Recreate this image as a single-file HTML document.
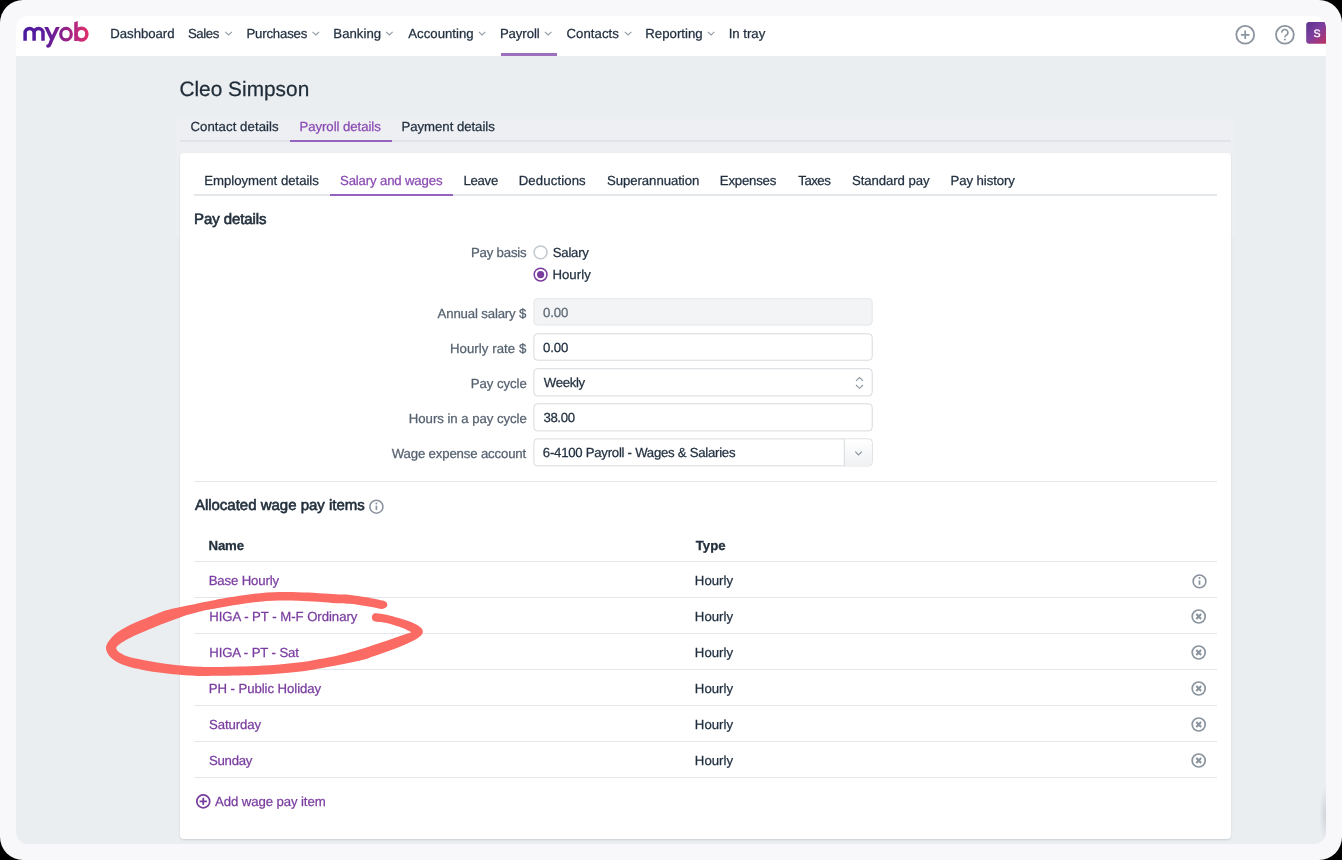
<!DOCTYPE html>
<html lang="en"><head><meta charset="utf-8"><title>Cleo Simpson - Payroll details</title>
<style>
html,body{margin:0;padding:0;}
body{width:1342px;height:860px;position:relative;overflow:hidden;background:#000;font-family:"Liberation Sans",sans-serif;}
.frame{position:absolute;left:0;top:0;width:1342px;height:860px;background:#f8f8fa;border-radius:23px;}
.inner{position:absolute;left:16px;top:16px;width:1310px;height:828px;background:#ebeef1;border-radius:12px;overflow:hidden;}
.nav{position:absolute;left:0;top:0;width:1310px;height:40px;background:#fff;}
.t{position:absolute;white-space:nowrap;line-height:1;text-rendering:geometricPrecision;-webkit-text-stroke:0.25px;}
.abs{position:absolute;}
.card{position:absolute;left:180px;top:153px;width:1051px;height:686px;background:#fff;border-radius:4px;box-shadow:0 1px 2px rgba(40,55,70,.16);}
.hl{position:absolute;height:1px;background:#e3e6ea;}
.inp{position:absolute;left:533px;width:340px;height:28px;box-sizing:border-box;border:1px solid #d9dde2;border-radius:4px;background:#fff;}
.inp.dis{background:#f3f4f5;border-color:#e6e8eb;}
svg{position:absolute;overflow:visible;}

</style></head>
<body>
<div class="frame"></div>
<div class="inner">
  <div class="abs" style="left:160px;top:103px;width:1059px;height:117px;background:#edeff2;"></div>
  <div class="nav"></div>
  <div class="abs" style="left:1303px;top:764px;width:7px;height:58px;background:radial-gradient(ellipse 7px 29px at 100% 60%,rgba(70,80,95,.17),rgba(70,80,95,0) 100%);"></div>
</div>
<!-- nav active underline -->
<div class="abs" style="left:500.5px;top:53px;width:56px;height:3px;background:#9d70bd;"></div>

<!-- tabs1 line -->
<div class="hl" style="left:180px;top:140px;width:1051px;height:2px;background:#e0e4e8;"></div>
<div class="abs" style="left:290px;top:140px;width:102px;height:2px;background:#9562bd;"></div>

<div class="card"></div>
<!-- tabs2 line -->
<div class="hl" style="left:194px;top:194px;width:1022.5px;height:2px;background:#e5e8eb;"></div>
<div class="abs" style="left:330px;top:194px;width:123px;height:2px;background:#9562bd;"></div>

<!-- divider -->
<div class="hl" style="left:194px;top:481px;width:1022.5px;"></div>

<!-- table lines -->
<div class="hl" style="left:194px;top:561px;width:1022.5px;"></div>
<div class="hl" style="left:194px;top:597px;width:1022.5px;"></div>
<div class="hl" style="left:194px;top:633px;width:1022.5px;"></div>
<div class="hl" style="left:194px;top:669px;width:1022.5px;"></div>
<div class="hl" style="left:194px;top:705px;width:1022.5px;"></div>
<div class="hl" style="left:194px;top:741px;width:1022.5px;"></div>
<div class="hl" style="left:194px;top:777px;width:1022.5px;"></div>

<svg width="1342" height="860" style="left:0;top:0" viewBox="0 0 1342 860" fill="none">
<defs><linearGradient id="lg" gradientUnits="userSpaceOnUse" x1="23" y1="0" x2="89" y2="0"><stop offset="0" stop-color="#4a1a9f"/><stop offset="0.35" stop-color="#5e1c9c"/><stop offset="0.62" stop-color="#8d2289"/><stop offset="0.8" stop-color="#b8297e"/><stop offset="1" stop-color="#e2306a"/></linearGradient>
<linearGradient id="av" x1="0" y1="0" x2="1" y2="1"><stop offset="0" stop-color="#5c3391"/><stop offset="0.45" stop-color="#7d3f9f"/><stop offset="1" stop-color="#c8305a"/></linearGradient>
<clipPath id="yc"><rect x="40" y="26.9" width="24" height="24"/></clipPath><clipPath id="ac"><rect x="16" y="16" width="1310" height="828" rx="12"/></clipPath></defs>
<g stroke="url(#lg)" stroke-width="3.5" fill="none">
<path d="M25.1,40.8V32.95A4.5,4.5 0 0 1 34.1,32.95V40.8M34.1,32.95A4.45,4.5 0 0 1 43,32.95V40.8"/>
<g clip-path="url(#yc)"><path d="M45.1,24.8L52.25,39.85"/><path d="M58.9,24.8L51.4,40.5C50.0,43.4 50.0,46.0 47.9,46.0" stroke-linecap="round"/></g>
<ellipse cx="66" cy="34.1" rx="5.3" ry="5.8" stroke-width="3.2"/>
<path d="M74.2,22.2L77.8,20.9V40.9H74.2Z" fill="url(#lg)" stroke="none"/><ellipse cx="81.5" cy="34.1" rx="5.4" ry="5.8"/>
</g>
<path d="M225.30,31.8L228.60,34.9L231.90,31.8" stroke="#949da8" stroke-width="1.15"/>
<path d="M312.50,31.8L315.80,34.9L319.10,31.8" stroke="#949da8" stroke-width="1.15"/>
<path d="M386.10,31.8L389.40,34.9L392.70,31.8" stroke="#949da8" stroke-width="1.15"/>
<path d="M478.80,31.8L482.10,34.9L485.40,31.8" stroke="#949da8" stroke-width="1.15"/>
<path d="M544.90,31.8L548.20,34.9L551.50,31.8" stroke="#949da8" stroke-width="1.15"/>
<path d="M624.80,31.8L628.10,34.9L631.40,31.8" stroke="#949da8" stroke-width="1.15"/>
<path d="M707.80,31.8L711.10,34.9L714.40,31.8" stroke="#949da8" stroke-width="1.15"/>
<circle cx="1245.2" cy="34.8" r="8.9" stroke="#8b949e" stroke-width="1.8"/><path d="M1240.9,34.8H1249.5M1245.2,30.5V39.1" stroke="#8b949e" stroke-width="1.7"/>
<circle cx="1284.9" cy="34.8" r="8.9" stroke="#8b949e" stroke-width="1.8"/><path d="M1281.9,32.6A3,3 0 1 1 1286.2,35.2Q1284.9,35.9 1284.9,37.3" stroke="#8b949e" stroke-width="1.6"/><circle cx="1284.9" cy="39.6" r="1" fill="#8b949e"/>
<g clip-path="url(#ac)"><rect x="1306.2" y="22" width="22" height="21.7" rx="3" fill="url(#av)"/></g>
<rect x="533.9" y="298.7" width="338.3" height="26.3" rx="3.5" fill="#f3f4f5" stroke="#e4e6e9" stroke-width="1"/>
<rect x="533.9" y="333.8" width="338.3" height="26.4" rx="3.5" fill="#fff" stroke="#d6dade" stroke-width="1"/>
<rect x="533.9" y="368.7" width="338.3" height="27.2" rx="3.5" fill="#fff" stroke="#d6dade" stroke-width="1"/>
<rect x="533.9" y="403.8" width="338.3" height="27.1" rx="3.5" fill="#fff" stroke="#d6dade" stroke-width="1"/>
<rect x="533.9" y="438.9" width="338.3" height="27.0" rx="3.5" fill="#fff" stroke="#d6dade" stroke-width="1"/>
<defs><linearGradient id="bg2" x1="0" y1="0" x2="0" y2="1"><stop offset="0" stop-color="#fff"/><stop offset="1" stop-color="#f0f1f3"/></linearGradient></defs>
<path d="M844.3,439.4H868.7A3,3 0 0 1 871.7,442.4V462.9A3,3 0 0 1 868.7,465.9H844.3Z" fill="url(#bg2)"/><path d="M844.3,439.2V466" stroke="#d6dade" stroke-width="1"/>
<circle cx="540.55" cy="252.35" r="6.45" fill="#fff" stroke="#c3c8ce" stroke-width="1.5"/>
<circle cx="540.6" cy="274.6" r="6.4" fill="#fff" stroke="#793c9f" stroke-width="1.5"/><circle cx="540.6" cy="274.6" r="3.6" fill="#793c9f"/>
<path d="M856,380.8L859.5,377.5L863,380.8M856,385L859.5,388.3L863,385" stroke="#8b949e" stroke-width="1.1"/>
<path d="M855.3,451.6L858.5,454.9L861.8,451.6" stroke="#8b949e" stroke-width="1.2"/>
<circle cx="376.4" cy="506.7" r="6.5" stroke="#8b949e" stroke-width="1.6"/><path d="M376.4,505.7V510.09999999999997" stroke="#8b949e" stroke-width="1.7"/><circle cx="376.4" cy="503.4" r="1.0" fill="#8b949e"/>
<circle cx="1199.5" cy="581.4" r="6.35" stroke="#8b949e" stroke-width="1.6"/><path d="M1199.5,580.4V584.8" stroke="#8b949e" stroke-width="1.7"/><circle cx="1199.5" cy="578.1" r="1.0" fill="#8b949e"/>
<circle cx="1198.7" cy="616.5" r="6.5" stroke="#8b949e" stroke-width="1.7"/><path d="M1196.3,614.1L1201.1000000000001,618.9M1201.1000000000001,614.1L1196.3,618.9" stroke="#8b949e" stroke-width="2.1"/>
<circle cx="1198.7" cy="652.5" r="6.5" stroke="#8b949e" stroke-width="1.7"/><path d="M1196.3,650.1L1201.1000000000001,654.9M1201.1000000000001,650.1L1196.3,654.9" stroke="#8b949e" stroke-width="2.1"/>
<circle cx="1198.7" cy="688.5" r="6.5" stroke="#8b949e" stroke-width="1.7"/><path d="M1196.3,686.1L1201.1000000000001,690.9M1201.1000000000001,686.1L1196.3,690.9" stroke="#8b949e" stroke-width="2.1"/>
<circle cx="1198.7" cy="724.5" r="6.5" stroke="#8b949e" stroke-width="1.7"/><path d="M1196.3,722.1L1201.1000000000001,726.9M1201.1000000000001,722.1L1196.3,726.9" stroke="#8b949e" stroke-width="2.1"/>
<circle cx="1198.7" cy="760.5" r="6.5" stroke="#8b949e" stroke-width="1.7"/><path d="M1196.3,758.1L1201.1000000000001,762.9M1201.1000000000001,758.1L1196.3,762.9" stroke="#8b949e" stroke-width="2.1"/>
<circle cx="203.27" cy="801.4" r="6.45" stroke="#793c9f" stroke-width="1.7"/><path d="M199.6,801.4H206.95M203.27,797.7V805.1" stroke="#793c9f" stroke-width="1.8"/>
</svg>
<div id="txt" style="position:absolute;left:0;top:0;width:1342px;height:860px;will-change:transform;">
<span class="t" style="left:110.33px;top:27.05px;font-size:13.2px;letter-spacing:-0.047px;color:#223040;font-weight:400">Dashboard</span>
<span class="t" style="left:187.93px;top:27.05px;font-size:13.2px;letter-spacing:-0.396px;color:#223040;font-weight:400">Sales</span>
<span class="t" style="left:246.43px;top:27.05px;font-size:13.2px;letter-spacing:-0.171px;color:#223040;font-weight:400">Purchases</span>
<span class="t" style="left:333.33px;top:27.05px;font-size:13.2px;letter-spacing:0.017px;color:#223040;font-weight:400">Banking</span>
<span class="t" style="left:408.30px;top:27.05px;font-size:13.2px;letter-spacing:0.012px;color:#223040;font-weight:400">Accounting</span>
<span class="t" style="left:499.93px;top:27.05px;font-size:13.2px;letter-spacing:-0.098px;color:#223040;font-weight:400">Payroll</span>
<span class="t" style="left:566.46px;top:27.05px;font-size:13.2px;letter-spacing:0.048px;color:#223040;font-weight:400">Contacts</span>
<span class="t" style="left:645.23px;top:27.05px;font-size:13.2px;letter-spacing:0.033px;color:#223040;font-weight:400">Reporting</span>
<span class="t" style="left:728.72px;top:27.05px;font-size:13.2px;letter-spacing:-0.016px;color:#223040;font-weight:400">In tray</span>
<span class="t" style="left:179.41px;top:80.25px;font-size:20.8px;letter-spacing:0.031px;color:#1f2c38;font-weight:400">Cleo Simpson</span>
<span class="t" style="left:190.46px;top:120.05px;font-size:13.2px;letter-spacing:0.067px;color:#223040;font-weight:400">Contact details</span>
<span class="t" style="left:299.43px;top:120.05px;font-size:13.2px;letter-spacing:-0.048px;color:#8a4bb3;font-weight:400">Payroll details</span>
<span class="t" style="left:401.53px;top:120.05px;font-size:13.2px;letter-spacing:-0.041px;color:#223040;font-weight:400">Payment details</span>
<span class="t" style="left:204.23px;top:174.15px;font-size:13.2px;letter-spacing:-0.025px;color:#223040;font-weight:400">Employment details</span>
<span class="t" style="left:340.03px;top:174.15px;font-size:13.2px;letter-spacing:-0.157px;color:#8a4bb3;font-weight:400">Salary and wages</span>
<span class="t" style="left:463.43px;top:174.15px;font-size:13.2px;letter-spacing:-0.283px;color:#223040;font-weight:400">Leave</span>
<span class="t" style="left:518.73px;top:174.15px;font-size:13.2px;letter-spacing:0.113px;color:#223040;font-weight:400">Deductions</span>
<span class="t" style="left:606.93px;top:174.15px;font-size:13.2px;letter-spacing:-0.056px;color:#223040;font-weight:400">Superannuation</span>
<span class="t" style="left:719.83px;top:174.15px;font-size:13.2px;letter-spacing:-0.214px;color:#223040;font-weight:400">Expenses</span>
<span class="t" style="left:798.31px;top:174.15px;font-size:13.2px;letter-spacing:-0.505px;color:#223040;font-weight:400">Taxes</span>
<span class="t" style="left:852.03px;top:174.15px;font-size:13.2px;letter-spacing:-0.085px;color:#223040;font-weight:400">Standard pay</span>
<span class="t" style="left:950.53px;top:174.15px;font-size:13.2px;letter-spacing:-0.082px;color:#223040;font-weight:400">Pay history</span>
<span class="t" style="left:194.01px;top:211.95px;font-size:15px;letter-spacing:-0.092px;color:#222f3c;font-weight:400;-webkit-text-stroke:0.6px #222f3c">Pay details</span>
<span class="t" style="left:194.91px;top:498.05px;font-size:15px;letter-spacing:-0.012px;color:#222f3c;font-weight:400;-webkit-text-stroke:0.6px #222f3c">Allocated wage pay items</span>
<span class="t" style="left:470.93px;top:245.85px;font-size:13.2px;letter-spacing:-0.179px;color:#55616f;font-weight:400">Pay basis</span>
<span class="t" style="left:552.73px;top:245.85px;font-size:13.2px;letter-spacing:-0.235px;color:#223040;font-weight:400">Salary</span>
<span class="t" style="left:552.43px;top:268.05px;font-size:13.2px;letter-spacing:0.047px;color:#223040;font-weight:400">Hourly</span>
<span class="t" style="left:437.60px;top:306.55px;font-size:13.2px;letter-spacing:-0.150px;color:#55616f;font-weight:400">Annual salary $</span>
<span class="t" style="left:542.99px;top:305.85px;font-size:13.2px;letter-spacing:-0.146px;color:#5f6b78;font-weight:400">0.00</span>
<span class="t" style="left:449.93px;top:341.55px;font-size:13.2px;letter-spacing:0.069px;color:#55616f;font-weight:400">Hourly rate $</span>
<span class="t" style="left:542.99px;top:340.85px;font-size:13.2px;letter-spacing:-0.146px;color:#223040;font-weight:400">0.00</span>
<span class="t" style="left:470.63px;top:376.55px;font-size:13.2px;letter-spacing:-0.034px;color:#55616f;font-weight:400">Pay cycle</span>
<span class="t" style="left:543.82px;top:375.85px;font-size:13.2px;letter-spacing:-0.348px;color:#223040;font-weight:400">Weekly</span>
<span class="t" style="left:408.83px;top:411.55px;font-size:13.2px;letter-spacing:-0.039px;color:#55616f;font-weight:400">Hours in a pay cycle</span>
<span class="t" style="left:543.40px;top:410.85px;font-size:13.2px;letter-spacing:-0.348px;color:#223040;font-weight:400">38.00</span>
<span class="t" style="left:391.72px;top:446.55px;font-size:13.2px;letter-spacing:-0.149px;color:#55616f;font-weight:400">Wage expense account</span>
<span class="t" style="left:542.87px;top:445.85px;font-size:13.2px;letter-spacing:-0.263px;color:#223040;font-weight:400">6-4100 Payroll - Wages &amp; Salaries</span>
<span class="t" style="left:208.55px;top:539.05px;font-size:13.2px;letter-spacing:-0.166px;color:#222f3c;font-weight:700">Name</span>
<span class="t" style="left:695.78px;top:539.05px;font-size:13.2px;letter-spacing:0.025px;color:#222f3c;font-weight:700">Type</span>
<span class="t" style="left:208.73px;top:574.15px;font-size:13.2px;letter-spacing:-0.147px;color:#793c9f;font-weight:400">Base Hourly</span>
<span class="t" style="left:209.23px;top:610.15px;font-size:13.2px;letter-spacing:-0.047px;color:#793c9f;font-weight:400">HIGA - PT - M-F Ordinary</span>
<span class="t" style="left:209.23px;top:646.15px;font-size:13.2px;letter-spacing:-0.115px;color:#793c9f;font-weight:400">HIGA - PT - Sat</span>
<span class="t" style="left:208.73px;top:682.15px;font-size:13.2px;letter-spacing:-0.063px;color:#793c9f;font-weight:400">PH - Public Holiday</span>
<span class="t" style="left:208.93px;top:718.15px;font-size:13.2px;letter-spacing:-0.080px;color:#793c9f;font-weight:400">Saturday</span>
<span class="t" style="left:208.93px;top:754.15px;font-size:13.2px;letter-spacing:-0.247px;color:#793c9f;font-weight:400">Sunday</span>
<span class="t" style="left:215.10px;top:795.05px;font-size:13.2px;letter-spacing:-0.100px;color:#793c9f;font-weight:400">Add wage pay item</span>
<span class="t" style="left:1313.38px;top:29.25px;font-size:10.6px;letter-spacing:0.000px;color:#fff;font-weight:400;-webkit-text-stroke:0.3px #fff">S</span>
<span class="t" style="left:694.83px;top:574.15px;font-size:13.2px;letter-spacing:0.025px;color:#223040;font-weight:400">Hourly</span>
<span class="t" style="left:694.83px;top:610.15px;font-size:13.2px;letter-spacing:0.025px;color:#223040;font-weight:400">Hourly</span>
<span class="t" style="left:694.83px;top:646.15px;font-size:13.2px;letter-spacing:0.025px;color:#223040;font-weight:400">Hourly</span>
<span class="t" style="left:694.83px;top:682.15px;font-size:13.2px;letter-spacing:0.025px;color:#223040;font-weight:400">Hourly</span>
<span class="t" style="left:694.83px;top:718.15px;font-size:13.2px;letter-spacing:0.025px;color:#223040;font-weight:400">Hourly</span>
<span class="t" style="left:694.83px;top:754.15px;font-size:13.2px;letter-spacing:0.025px;color:#223040;font-weight:400">Hourly</span>
</div>
<svg width="1342" height="860" style="left:0;top:0" viewBox="0 0 1342 860"><path d="M387.3,604.6C387.1,604.2 387.0,602.9 386.4,602.3C385.8,601.7 384.8,601.1 383.9,600.8C383.0,600.4 383.8,600.8 380.9,600.2C378.0,599.6 371.4,598.2 366.3,597.3C361.2,596.4 355.1,595.4 350.0,594.9C344.9,594.4 344.7,594.8 336.0,594.3C327.3,593.8 310.7,592.4 298.0,592.2C285.3,592.0 274.0,591.9 260.0,593.2C246.0,594.5 225.8,598.2 214.0,600.2C202.2,602.2 196.8,603.7 189.0,605.3C181.2,606.9 172.8,608.6 167.5,610.0C162.2,611.4 160.1,612.6 157.0,613.7C153.9,614.9 151.5,615.8 148.8,616.9C146.1,618.0 143.4,619.1 140.7,620.2C138.0,621.4 135.3,622.5 132.6,623.8C129.9,625.1 126.9,626.5 124.4,627.9C122.0,629.3 119.9,630.5 117.9,632.0C115.9,633.5 113.8,635.2 112.2,636.9C110.6,638.6 109.1,640.5 108.1,642.1C107.1,643.7 106.4,645.2 106.1,646.6C105.8,648.0 106.1,649.3 106.5,650.7C106.9,652.1 107.5,653.4 108.5,654.8C109.5,656.1 110.6,657.5 112.2,658.8C113.8,660.1 115.9,661.4 117.9,662.5C119.9,663.6 122.0,664.4 124.4,665.3C126.9,666.2 129.9,667.1 132.6,667.8C135.3,668.5 136.6,668.6 140.7,669.4C144.8,670.1 151.6,671.5 157.0,672.3C162.4,673.1 167.8,673.8 173.2,674.3C178.6,674.8 185.0,675.2 189.5,675.5C194.0,675.8 195.9,676.0 200.0,676.0C204.1,676.0 204.0,675.9 214.0,675.7C224.0,675.5 246.0,675.4 260.0,674.7C274.0,674.1 285.3,673.3 298.0,671.8C310.7,670.2 325.3,667.4 336.0,665.4C346.7,663.4 355.8,661.6 362.2,660.0C368.6,658.4 369.6,657.5 374.4,655.9C379.1,654.3 385.3,652.2 390.7,650.2C396.1,648.2 402.7,645.6 407.0,643.7C411.3,641.8 414.3,640.3 416.7,638.8C419.1,637.3 420.6,635.9 421.6,634.8C422.6,633.6 422.7,632.8 422.8,631.9C422.9,631.0 422.7,630.1 422.0,629.1C421.3,628.1 420.2,627.0 418.4,625.8C416.6,624.6 414.3,623.4 411.0,622.1C407.7,620.8 402.9,619.3 398.8,618.1C394.7,616.9 390.4,615.6 386.6,614.8C382.8,614.0 378.3,613.3 376.0,613.2C373.7,613.1 373.7,613.7 373.0,614.4C372.3,615.1 371.8,616.3 371.8,617.3C371.8,618.3 372.3,619.7 373.0,620.4C373.7,621.1 375.5,621.5 376.0,621.7C377.8,621.9 382.8,622.2 386.6,623.0C390.4,623.8 395.4,625.5 398.8,626.6C402.2,627.8 404.9,629.0 407.0,629.9C409.1,630.8 410.7,631.8 411.4,632.2C409.3,632.9 403.6,634.8 398.8,636.4C394.0,638.0 388.0,640.3 382.6,642.1C377.2,643.9 371.7,645.7 366.3,647.4C360.9,649.1 355.1,650.9 350.0,652.3C344.9,653.7 344.7,654.2 336.0,655.9C327.3,657.6 310.7,660.9 298.0,662.5C285.3,664.1 274.0,665.0 260.0,665.8C246.0,666.5 224.0,666.9 214.0,667.0C204.0,667.1 204.1,666.8 200.0,666.7C195.9,666.6 194.0,666.5 189.5,666.2C185.0,665.9 178.6,665.3 173.2,664.7C167.8,664.1 162.4,663.4 157.0,662.5C151.6,661.6 145.4,660.6 140.7,659.6C135.9,658.6 131.8,657.8 128.5,656.8C125.2,655.8 123.0,654.5 121.2,653.5C119.4,652.5 118.3,651.7 117.5,650.7C116.7,649.7 116.0,648.5 116.3,647.4C116.6,646.3 117.9,645.4 119.5,644.2C121.1,643.0 123.2,641.7 126.0,640.1C128.8,638.5 132.8,636.6 136.6,634.8C140.4,633.0 144.1,631.5 148.8,629.5C153.6,627.5 159.7,625.1 165.1,623.0C170.5,620.9 175.6,618.8 181.4,616.9C187.2,615.0 194.6,613.0 200.0,611.6C205.4,610.2 204.0,610.4 214.0,608.7C224.0,607.1 246.0,603.0 260.0,601.7C274.0,600.4 285.3,600.5 298.0,600.8C310.7,601.0 327.3,602.7 336.0,603.2C344.7,603.7 345.6,603.4 350.0,603.8C354.4,604.2 358.1,604.9 362.2,605.5C366.3,606.1 371.2,606.9 374.4,607.5C377.6,608.1 379.7,608.8 381.5,608.9C383.3,609.0 384.1,608.5 385.0,608.1C385.9,607.7 386.5,607.1 386.9,606.5C387.3,605.9 387.2,604.9 387.3,604.6Z" fill="#fb6a63"/></svg>
</body></html>
